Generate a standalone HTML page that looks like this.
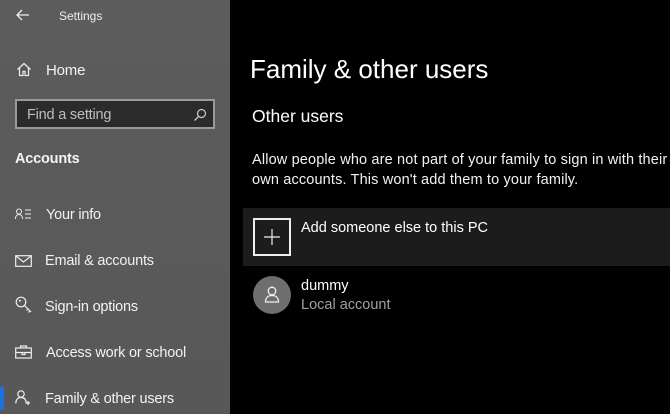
<!DOCTYPE html>
<html><head><meta charset="utf-8"><style>
*{margin:0;padding:0;box-sizing:border-box}
body{width:670px;height:414px;overflow:hidden;background:#000;font-family:"Liberation Sans",sans-serif;color:#fff;position:relative}
.side{position:absolute;left:0;top:0;width:230px;height:414px;background:linear-gradient(180deg,#5c5c5c,#585858)}
.t{position:absolute;white-space:nowrap}
.nav{font-size:14.5px;letter-spacing:-0.2px;color:#f2f2f2}
svg{position:absolute}
</style></head><body>
<div class="side">
 <svg style="left:16px;top:9px" width="14" height="12" viewBox="0 0 14 12"><path d="M13 6H1M6 1L1 6l5 5" stroke="#eee" stroke-width="1.3" fill="none"/></svg>
 <div class="t" style="left:59px;top:9px;font-size:12px;color:#eee">Settings</div>
 <svg style="left:16px;top:62px" width="16" height="15" viewBox="0 0 16 15"><path d="M1.5 7.5L8 1.5l6.5 6M3.5 6v7.5h3.5v-4h2v4h3.5V6" stroke="#eee" stroke-width="1.2" fill="none"/></svg>
 <div class="t nav" style="left:46px;top:62px;font-size:15px">Home</div>
 <div style="position:absolute;left:15px;top:99px;width:200px;height:30px;border:2px solid #9a9a9a;background:#2b2b2b"></div>
 <div class="t" style="left:27px;top:107px;font-size:14.5px;color:#bdbdbd;letter-spacing:-0.2px">Find a setting</div>
 <svg style="left:193px;top:108px" width="14" height="14" viewBox="0 0 14 14"><circle cx="8.5" cy="5.5" r="4" stroke="#ccc" stroke-width="1.2" fill="none"/><path d="M5.6 8.4L1.5 12.5" stroke="#ccc" stroke-width="1.3"/></svg>
 <div class="t" style="left:15px;top:151px;font-size:14.5px;font-weight:bold;color:#f5f5f5;letter-spacing:-0.2px">Accounts</div>

 <svg style="left:15px;top:208px" width="17" height="12" viewBox="0 0 17 12"><circle cx="4" cy="3.5" r="2.5" stroke="#eee" fill="none"/><path d="M0.5 11c0-3 1.5-4.5 3.5-4.5s3.5 1.5 3.5 4.5M10 2h6M10 6h6M10 10h6" stroke="#eee" fill="none"/></svg>
 <div class="t nav" style="left:46px;top:207px">Your info</div>
 <svg style="left:15px;top:255px" width="17" height="12" viewBox="0 0 17 12"><rect x="0.7" y="0.7" width="15.6" height="10.6" stroke="#eee" fill="none" stroke-width="1.2"/><path d="M1 1l7.5 6L16 1" stroke="#eee" fill="none" stroke-width="1.2"/></svg>
 <div class="t nav" style="left:45px;top:253px">Email &amp; accounts</div>
 <svg style="left:15px;top:296px" width="18" height="18" viewBox="0 0 18 18"><circle cx="6" cy="6" r="4.8" stroke="#eee" fill="none" stroke-width="1.2"/><circle cx="4.8" cy="4.8" r="1" fill="#eee"/><path d="M9.5 9.5l6.5 6.5M13 13l-1.5 1.5M15 15l-1.5 1.5" stroke="#eee" stroke-width="1.2"/></svg>
 <div class="t nav" style="left:45px;top:299px">Sign-in options</div>
 <svg style="left:15px;top:345px" width="17" height="14" viewBox="0 0 17 14"><rect x="0.7" y="3" width="15.6" height="10" stroke="#eee" fill="none" stroke-width="1.2"/><path d="M5.5 3V1h6v2M1 7.5h15M7 7.5v2h3v-2" stroke="#eee" fill="none" stroke-width="1.2"/></svg>
 <div class="t nav" style="left:46px;top:345px">Access work or school</div>
 <div style="position:absolute;left:0;top:387px;width:4px;height:23px;background:#1f6fe0"></div>
 <svg style="left:15px;top:390px" width="17" height="15" viewBox="0 0 17 15"><circle cx="6" cy="4" r="3.2" stroke="#eee" fill="none" stroke-width="1.2"/><path d="M0.8 13.5c0-4 2-6 5.2-6s5.2 2 5.2 6M13 11v4M11 13h4" stroke="#eee" fill="none" stroke-width="1.2"/></svg>
 <div class="t nav" style="left:45px;top:391px">Family &amp; other users</div>
</div>

<div class="t" style="left:250px;top:54px;font-size:26px;letter-spacing:0px;color:#fff">Family &amp; other users</div>
<div class="t" style="left:252px;top:106px;font-size:17.5px;letter-spacing:0px">Other users</div>
<div class="t" style="left:252px;top:150px;font-size:14.5px;letter-spacing:0.15px;line-height:20px;color:#f2f2f2">Allow people who are not part of your family to sign in with their<br>own accounts. This won't add them to your family.</div>

<div style="position:absolute;left:243px;top:208px;width:427px;height:58px;background:#1c1c1c"></div>
<div style="position:absolute;left:253px;top:218px;width:38px;height:38px;border:2px solid #eee"></div>
<svg style="left:263px;top:228px" width="18" height="18" viewBox="0 0 18 18"><path d="M9 1v16M1 9h16" stroke="#eee" stroke-width="1.2"/></svg>
<div class="t" style="left:301px;top:220px;font-size:14.5px;letter-spacing:0px">Add someone else to this PC</div>

<div style="position:absolute;left:253px;top:276px;width:38px;height:38px;border-radius:50%;background:#6e6e6e"></div>
<svg style="left:264px;top:286px" width="16" height="18" viewBox="0 0 16 18"><circle cx="8" cy="5" r="3.8" stroke="#eee" fill="none" stroke-width="1.3"/><path d="M1.5 16c0-4.5 2.8-6.5 6.5-6.5s6.5 2 6.5 6.5z" stroke="#eee" fill="none" stroke-width="1.3"/></svg>
<div class="t" style="left:301px;top:278px;font-size:14.5px;letter-spacing:0px">dummy</div>
<div class="t" style="left:301px;top:297px;font-size:14.5px;letter-spacing:0px;color:#a0a0a0">Local account</div>
</body></html>
